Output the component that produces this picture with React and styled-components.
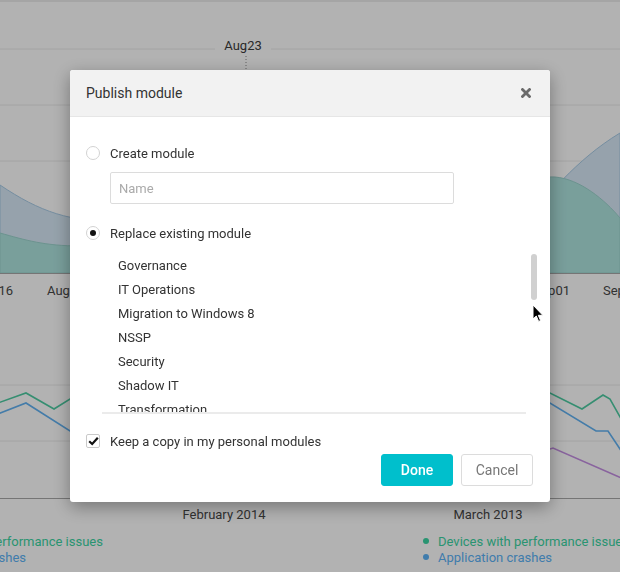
import React from 'react';
import styled, { createGlobalStyle } from 'styled-components';

const GlobalStyle = createGlobalStyle`
  html, body {
    margin: 0;
    padding: 0;
  }
  body {
    font-family: Roboto, 'Liberation Sans', Arial, sans-serif;
    background: #fff;
    color: #333;
  }
`;

const modules = [
  'Governance',
  'IT Operations',
  'Migration to Windows 8',
  'NSSP',
  'Security',
  'Shadow IT',
  'Transformation',
];

const legend = [
  { label: 'Devices with performance issues', color: '#3bd4a3' },
  { label: 'Application crashes', color: '#5cb2f6' },
];

// page behind the dialog
const Page = styled.div`
  width: 620px;
  height: 572px;
  overflow: hidden;
  box-sizing: border-box;
  border-top: 2px solid #ececec;
  display: flex;
  flex-direction: column;
`;

const ChartSvg = styled.svg`
  display: block;
  flex: none;
  font-family: Roboto, 'Liberation Sans', Arial, sans-serif;
  font-size: 13px;
`;

const LegendRow = styled.div`
  display: grid;
  grid-template-columns: 526px auto;
  margin-left: -103px;
  white-space: nowrap;
`;

const LegendList = styled.ul`
  margin: 0;
  padding: 0;
  list-style: none;
`;

const LegendItem = styled.li`
  display: flex;
  align-items: center;
  gap: 9px;
  height: 16px;
  font-size: 13px;
  color: ${(p) => p.$color};
  &::before {
    content: '';
    width: 6px;
    height: 6px;
    border-radius: 50%;
    background: ${(p) => p.$color};
  }
`;

// dialog
const Overlay = styled.div`
  position: fixed;
  inset: 0;
  background: rgba(0, 0, 0, 0.3);
  display: flex;
  justify-content: center;
  align-items: flex-start;
  padding-top: 70px;
`;

const Dialog = styled.div`
  width: 480px;
  background: #fff;
  border-radius: 3px;
  overflow: hidden;
  box-shadow: 0 5px 18px rgba(0, 0, 0, 0.35);
`;

const Header = styled.div`
  height: 46px;
  display: flex;
  align-items: center;
  justify-content: space-between;
  padding: 0 19px 0 16px;
  background: #f2f2f2;
  border-bottom: 1px solid #e6e6e6;
`;

const Title = styled.h2`
  margin: 0;
  font-size: 14px;
  font-weight: 400;
  color: #333;
`;

const CloseButton = styled.button`
  width: 10px;
  height: 10px;
  padding: 0;
  border: none;
  background: none;
  display: flex;
  cursor: pointer;
`;

const Body = styled.div`
  display: flex;
  flex-direction: column;
  padding: 26px 17px 16px 16px;
`;

const OptionRow = styled.label`
  display: flex;
  align-items: center;
  gap: 10px;
  height: 20px;
  margin-top: ${(p) => p.$gap || 0}px;
  font-size: 13px;
  color: #333;
`;

const RadioMark = styled.span`
  width: 14px;
  height: 14px;
  box-sizing: border-box;
  border: 1px solid #d2d2d2;
  border-radius: 50%;
  background: #fff;
  display: grid;
  place-items: center;
  &::after {
    content: '';
    width: 6px;
    height: 6px;
    border-radius: 50%;
    background: ${(p) => (p.$checked ? '#111' : 'transparent')};
  }
`;

const CheckMark = styled.span`
  width: 14px;
  height: 14px;
  box-sizing: border-box;
  border: 1px solid #c9c9c9;
  border-radius: 2px;
  background: #fff;
  display: grid;
  place-items: center;
`;

const NameInput = styled.input`
  width: 344px;
  height: 32px;
  box-sizing: border-box;
  margin: 9px 0 0 24px;
  padding: 0 8px;
  border: 1px solid #dcdcdc;
  border-radius: 2px;
  font-family: inherit;
  font-size: 13px;
  color: #333;
  outline: none;
  &::placeholder {
    color: #aaa;
  }
`;

const ListFrame = styled.div`
  display: flex;
  align-items: flex-start;
  gap: 5px;
  margin: 9px 0 0 16px;
`;

const ModuleList = styled.ul`
  flex: none;
  width: 424px;
  height: 162px;
  box-sizing: border-box;
  margin: 0;
  padding: 2px 0 0 16px;
  list-style: none;
  overflow: hidden;
  border-bottom: 2px solid #ebebeb;
`;

const ModuleItem = styled.li`
  height: 24px;
  line-height: 24px;
  font-size: 13px;
  color: #333;
`;

const ScrollThumb = styled.div`
  flex: none;
  width: 6px;
  height: 46px;
  margin-top: 2px;
  border-radius: 3px;
  background: #d0d0d0;
`;

const Footer = styled.div`
  display: flex;
  justify-content: flex-end;
  gap: 8px;
  margin-top: 3px;
`;

const Button = styled.button`
  width: 72px;
  height: 32px;
  box-sizing: border-box;
  border-radius: 3px;
  font-family: inherit;
  font-size: 14px;
  font-weight: ${(p) => (p.$primary ? 500 : 400)};
  color: ${(p) => (p.$primary ? '#fff' : '#777')};
  background: ${(p) => (p.$primary ? '#00bfcc' : '#fff')};
  border: 1px solid ${(p) => (p.$primary ? '#00bfcc' : '#dcdcdc')};
  cursor: pointer;
`;

const Pointer = styled.svg`
  position: fixed;
  left: 532px;
  top: 304px;
`;

const TimelineChart = () => (
  <ChartSvg width="620" height="298" viewBox="0 2 620 298">
    {[49, 105, 161, 217].map((y) => (
      <line key={y} x1="0" x2="620" y1={y} y2={y} stroke="#eaeaea" />
    ))}
    <path
      d="M0,185 C40,212 70,222 120,222 S300,120 400,200 S500,228 530,215 C545,200 575,160 620,133 L620,273 L0,273 Z"
      fill="#d7e9f6"
      stroke="#a8cbe6"
    />
    <path
      d="M0,233 C25,240 45,246 80,246 S300,190 500,200 C520,185 540,176 555,177 C580,179 605,200 620,218 L620,273 L0,273 Z"
      fill="#aee4df"
      stroke="#9bd3cd"
    />
    <line x1="246" x2="246" y1="56" y2="273" stroke="#8a8a8a" strokeDasharray="1 2" />
    <rect x="215" y="38" width="56" height="18" fill="#fff" />
    <text x="243" y="50" textAnchor="middle" fill="#3c3c3c">Aug23</text>
    <line x1="0" x2="620" y1="273.5" y2="273.5" stroke="#a8a8a8" />
    <g fill="#484848">
      <text x="13" y="295" textAnchor="end">Aug16</text>
      <text x="47" y="295">Aug19</text>
      <text x="570" y="295" textAnchor="end">Sep01</text>
      <text x="603" y="295">Sep08</text>
    </g>
  </ChartSvg>
);

const TrendChart = () => (
  <ChartSvg width="620" height="233" viewBox="0 300 620 233">
    {[385, 441].map((y) => (
      <line key={y} x1="0" x2="620" y1={y} y2={y} stroke="#eaeaea" />
    ))}
    <line x1="0" x2="620" y1="498.5" y2="498.5" stroke="#a8a8a8" />
    <g fill="none" strokeWidth="1.6">
      <polyline points="-5,404 26,393 54,409 70,399 300,390 550,393 582,409 603,395 610,399 624,424" stroke="#4ecca3" />
      <polyline points="-5,415 26,403 70,431 300,420 550,403 596,431 608,431 624,455" stroke="#62b2f2" />
      <polyline points="300,460 550,449 553,448 624,479" stroke="#c48fe2" />
    </g>
    <g fill="#484848">
      <text x="224" y="519" textAnchor="middle">February 2014</text>
      <text x="488" y="519" textAnchor="middle">March 2013</text>
    </g>
  </ChartSvg>
);

const Legend = () => (
  <LegendList>
    {legend.map((item) => (
      <LegendItem key={item.label} $color={item.color}>
        {item.label}
      </LegendItem>
    ))}
  </LegendList>
);

const App = () => {
  return (
    <>
      <GlobalStyle />
      <Page>
        <TimelineChart />
        <TrendChart />
        <LegendRow>
          <Legend />
          <Legend />
        </LegendRow>
      </Page>

      <Overlay>
        <Dialog>
          <Header>
            <Title>Publish module</Title>
            <CloseButton aria-label="Close">
              <svg width="10" height="10" viewBox="0 0 10 10">
                <path d="M1.5 1.5 L8.5 8.5 M8.5 1.5 L1.5 8.5" stroke="#6b6b6b" strokeWidth="2.8" strokeLinecap="square" />
              </svg>
            </CloseButton>
          </Header>
          <Body>
            <OptionRow>
              <RadioMark />
              Create module
            </OptionRow>
            <NameInput placeholder="Name" />
            <OptionRow $gap={19}>
              <RadioMark $checked />
              Replace existing module
            </OptionRow>
            <ListFrame>
              <ModuleList>
                {modules.map((name) => (
                  <ModuleItem key={name}>{name}</ModuleItem>
                ))}
              </ModuleList>
              <ScrollThumb />
            </ListFrame>
            <OptionRow $gap={17}>
              <CheckMark>
                <svg width="11" height="10" viewBox="0 0 11 10">
                  <path d="M1.2 5.2 L4.2 8 L9.8 1.8" fill="none" stroke="#111" strokeWidth="2.2" />
                </svg>
              </CheckMark>
              Keep a copy in my personal modules
            </OptionRow>
            <Footer>
              <Button $primary>Done</Button>
              <Button>Cancel</Button>
            </Footer>
          </Body>
        </Dialog>
      </Overlay>

      <Pointer width="12" height="19" viewBox="0 0 12 19">
        <path d="M1 1 L1 15 L4.3 12 L6.6 17.4 L8.6 16.6 L6.3 11.3 L10.8 11.3 Z" fill="#000" stroke="#fff" strokeWidth="1" />
      </Pointer>
    </>
  );
};

export default App;
